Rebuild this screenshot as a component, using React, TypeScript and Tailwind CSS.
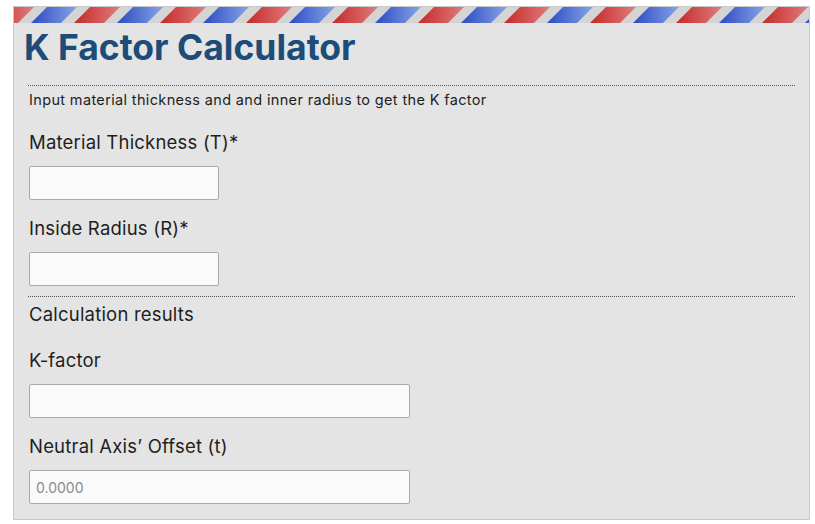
function AirmailStripe() {
  return (
    <svg className="block h-[16px] w-full" aria-hidden="true">
      <defs>
        <linearGradient id="red" x1="0" y1="0" x2="1" y2="0">
          <stop offset="0" stopColor="#c42929" />
          <stop offset="1" stopColor="#e27c7c" />
        </linearGradient>
        <linearGradient id="blue" x1="0" y1="0" x2="1" y2="0">
          <stop offset="0" stopColor="#2b4bc0" />
          <stop offset="1" stopColor="#86a3e8" />
        </linearGradient>
        <pattern id="airmail" width="86" height="16" patternUnits="userSpaceOnUse">
          <rect width="86" height="16" fill="#d4d4d4" />
          <polygon points="17,16 47,16 63,0 33,0" fill="url(#blue)" />
          <polygon points="60,16 90,16 106,0 76,0" fill="url(#red)" />
          <polygon points="-26,16 4,16 20,0 -10,0" fill="url(#red)" />
        </pattern>
      </defs>
      <rect width="100%" height="16" fill="url(#airmail)" />
    </svg>
  );
}

export default function App() {
  const font = { fontFamily: "Inter, 'Noto Sans', sans-serif" };

  const inputSmall =
    "block h-[34px] w-[190px] rounded-[2px] border border-[#a9a9a9] bg-[#fafafa] px-[6px] text-[14px] text-[#333] outline-none";
  const inputWide =
    "block h-[34px] w-[381px] rounded-[2px] border border-[#a9a9a9] bg-[#fafafa] px-[6px] text-[14px] text-[#333] outline-none placeholder:text-[#8a8a8a]";
  const label = "block text-[18.5px] leading-[24px] tracking-[0.2px] text-[#1e1e1e]";

  return (
    <div className="min-h-screen bg-white pt-[6px]" style={font}>
      <div className="ml-[13px] w-[797px] border border-[#c9c9c9] bg-[#e4e4e4] pb-[15px]">
        <AirmailStripe />

        <h1 className="mt-[4px] pl-[10px] text-[35.5px] font-bold leading-[41px] text-[#1d4c79]">
          K Factor Calculator
        </h1>

        <div className="px-[14px]">
          <div className="mt-[17px] border-t border-dotted border-[#555]" />

          <p className="mt-[4px] pl-[1px] text-[14.5px] leading-[20px] tracking-[0.35px] text-[#1e1e1e]">
            Input material thickness and and inner radius to get the K factor
          </p>

          <div className="pl-[1px]">
            <label className={`mt-[20px] ${label}`}>Material Thickness (T)*</label>
            <input className={`mt-[12px] ${inputSmall}`} />

            <label className={`mt-[16px] ${label}`}>Inside Radius (R)*</label>
            <input className={`mt-[12px] ${inputSmall}`} />
          </div>

          <div className="mt-[10px] border-t border-dotted border-[#555]" />

          <div className="pl-[1px]">
            <div className={`mt-[5px] ${label}`}>Calculation results</div>

            <label className={`mt-[22px] ${label}`}>K-factor</label>
            <input className={`mt-[12px] ${inputWide}`} readOnly />

            <label className={`mt-[16px] ${label}`}>Neutral Axis’ Offset (t)</label>
            <input className={`mt-[12px] ${inputWide}`} placeholder="0.0000" readOnly />
          </div>
        </div>
      </div>
    </div>
  );
}
